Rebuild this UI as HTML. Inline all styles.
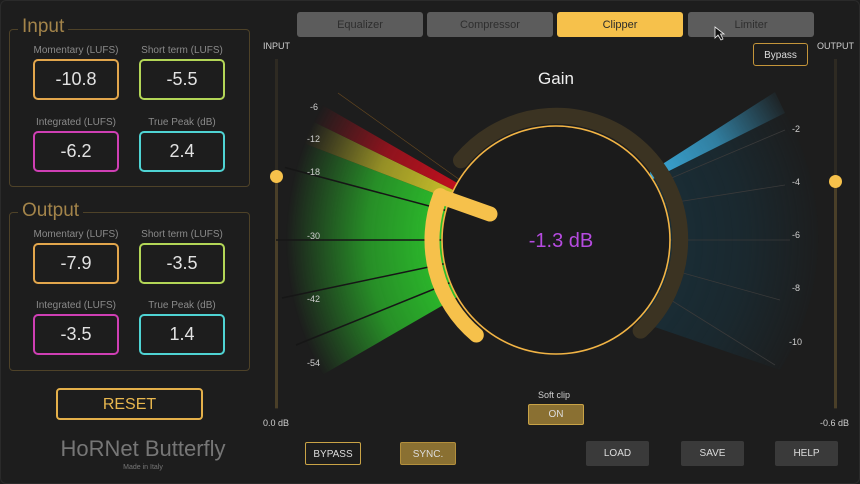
<!DOCTYPE html>
<html><head><meta charset="utf-8"><style>
*{margin:0;padding:0;box-sizing:border-box}
body{width:860px;height:484px;background:#1d1d1d;overflow:hidden;position:relative;font-family:"Liberation Sans Narrow","Liberation Sans",sans-serif;color:#ccc}
.a{position:absolute}
.grp{position:absolute;border:1.5px solid #4e4228;border-radius:4px}
.leg{position:absolute;background:#1d1d1d;color:#a3844a;font-size:19px;padding:0 4px;line-height:20px}
.lbl{position:absolute;font-size:10px;color:#8a8a8a;text-align:center;width:110px}
.val{position:absolute;width:86px;height:41px;border:2px solid;border-radius:5px;font-size:18px;color:#e2e2e2;text-align:center;line-height:37px}
.tab{position:absolute;top:12px;height:25px;width:126px;background:#5c5c5c;border-radius:3px;font-size:11px;color:#2e2e2e;text-align:center;line-height:25px;padding-top:1px}
.btn{position:absolute;height:23px;font-size:10px;text-align:center;line-height:21px;border-radius:2px;color:#ddd;padding-top:1px}
.sm{position:absolute;font-size:9px;color:#cfcfcf}
</style></head><body>
<div class="a" style="left:0;top:0;width:860px;height:484px;border:1px solid #2a2a2a;border-radius:6px"></div>

<div class="grp" style="left:9px;top:29px;width:241px;height:158px"></div>
<div class="leg" style="left:18px;top:17px">Input</div>
<div class="lbl" style="left:21px;top:45px">Momentary (LUFS)</div>
<div class="lbl" style="left:127px;top:45px">Short term (LUFS)</div>
<div class="val" style="left:33px;top:59px;border-color:#e2a64c">-10.8</div>
<div class="val" style="left:139px;top:59px;border-color:#b3d657">-5.5</div>
<div class="lbl" style="left:21px;top:117px">Integrated (LUFS)</div>
<div class="lbl" style="left:127px;top:117px">True Peak (dB)</div>
<div class="val" style="left:33px;top:131px;border-color:#cf3fb4">-6.2</div>
<div class="val" style="left:139px;top:131px;border-color:#4fd3d3">2.4</div>

<div class="grp" style="left:9px;top:212px;width:241px;height:159px"></div>
<div class="leg" style="left:18px;top:201px">Output</div>
<div class="lbl" style="left:21px;top:229px">Momentary (LUFS)</div>
<div class="lbl" style="left:127px;top:229px">Short term (LUFS)</div>
<div class="val" style="left:33px;top:243px;border-color:#e2a64c">-7.9</div>
<div class="val" style="left:139px;top:243px;border-color:#b3d657">-3.5</div>
<div class="lbl" style="left:21px;top:300px">Integrated (LUFS)</div>
<div class="lbl" style="left:127px;top:300px">True Peak (dB)</div>
<div class="val" style="left:33px;top:314px;border-color:#cf3fb4">-3.5</div>
<div class="val" style="left:139px;top:314px;border-color:#4fd3d3">1.4</div>

<div class="a" style="left:56px;top:388px;width:147px;height:32px;border:2px solid #e4b04a;border-radius:4px;color:#e8b74e;font-size:16px;text-align:center;line-height:30px">RESET</div>
<div class="a" style="left:20px;top:436px;width:246px;text-align:center;font-size:22px;color:#767676">HoRNet Butterfly</div>
<div class="a" style="left:20px;top:464px;width:246px;text-align:center;font-size:7px;color:#777">Made in Italy</div>

<div class="sm" style="left:263px;top:41px">INPUT</div>
<div class="a" style="left:275px;top:59px;width:3px;height:350px;background:#2e2a22"></div>
<div class="a" style="left:275px;top:176px;width:3px;height:232px;background:#4a3f28"></div>
<div class="a" style="left:270px;top:170px;width:13px;height:13px;border-radius:50%;background:#f6c14b"></div>
<div class="sm" style="left:263px;top:418px">0.0 dB</div>
<div class="sm" style="left:817px;top:41px">OUTPUT</div>
<div class="a" style="left:834px;top:59px;width:3px;height:350px;background:#2e2a22"></div>
<div class="a" style="left:834px;top:181px;width:3px;height:227px;background:#4a3f28"></div>
<div class="a" style="left:829px;top:175px;width:13px;height:13px;border-radius:50%;background:#f6c14b"></div>
<div class="sm" style="left:820px;top:418px">-0.6 dB</div>

<div class="tab" style="left:297px">Equalizer</div>
<div class="tab" style="left:427px">Compressor</div>
<div class="tab" style="left:557px;background:#f6c14b;color:#2a2a2a">Clipper</div>
<div class="tab" style="left:688px">Limiter</div>
<div class="btn" style="left:753px;top:43px;width:55px;border:1.5px solid #c4953a;border-radius:3px">Bypass</div>

<svg class="a" style="left:0;top:0" width="860" height="484" viewBox="0 0 860 484">
<defs>
<radialGradient id="fl" gradientUnits="userSpaceOnUse" cx="556" cy="240" r="270">
<stop offset="0.42" stop-color="#fff" stop-opacity="1"/><stop offset="0.7" stop-color="#fff" stop-opacity="0.7"/><stop offset="1" stop-color="#fff" stop-opacity="0"/></radialGradient>
<mask id="m"><rect width="860" height="484" fill="url(#fl)"/></mask>
</defs>
<g mask="url(#m)">
<path d="M453.3 200.6 L303.8 143.3 A270 270 0 0 0 322.2 375 L460.7 295 A110 110 0 0 1 453.3 200.6Z" fill="#2cbf2c"/>
<path d="M457.1 191.8 L313.3 121.7 A270 270 0 0 0 303.8 143.3 L453.3 200.6 A110 110 0 0 1 457.1 191.8Z" fill="#c8c02a"/>
<path d="M460.7 185 L322.2 105 A270 270 0 0 0 313.3 121.7 L457.1 191.8 A110 110 0 0 1 460.7 185Z" fill="#c0101e"/>
<path d="M650 172 L775 92 L785 113 L651 180Z" fill="#3aa8d8"/>
<path d="M652 180 L785 113 A250 250 0 0 1 780 370 L640 322 Z" fill="#173848" opacity="0.6"/>
</g>
<g stroke="#161616" stroke-width="1.5">
<line x1="449.7" y1="211.5" x2="285" y2="167.5"/><line x1="446" y1="240" x2="276" y2="240"/>
<line x1="448.4" y1="262.9" x2="282" y2="298"/><line x1="454" y1="281" x2="296" y2="345"/>
</g>
<line x1="460" y1="180" x2="338" y2="93" stroke="#6a4a20" stroke-width="0.6"/>
<g stroke="#3a3a3a" stroke-width="0.8">
<line x1="658" y1="205" x2="785" y2="185"/><line x1="668" y1="240" x2="790" y2="240"/>
<line x1="665" y1="268" x2="780" y2="300"/><line x1="658" y1="292" x2="775" y2="365"/>
<line x1="655" y1="185" x2="785" y2="130"/>
</g>
<path d="M461 160.3 A124 124 0 1 1 640.6 330.6" fill="none" stroke="#3b3322" stroke-width="16" stroke-linecap="round"/>
<circle cx="556" cy="240" r="114" fill="#1b1b1b" stroke="#f2b445" stroke-width="1.6"/>
<path d="M440.2 195.6 A124 124 0 0 0 476.3 335" fill="none" stroke="#f6c14b" stroke-width="15" stroke-linecap="round"/>
<line x1="442" y1="197" x2="490" y2="214" stroke="#f6c14b" stroke-width="15" stroke-linecap="round"/>
<g font-family="Liberation Sans,sans-serif" font-size="9" fill="#cfcfcf">
<text x="310" y="110">-6</text><text x="307" y="142">-12</text><text x="307" y="175">-18</text>
<text x="307" y="239">-30</text><text x="307" y="302">-42</text><text x="307" y="366">-54</text>
<text x="792" y="132">-2</text><text x="792" y="185">-4</text><text x="792" y="238">-6</text>
<text x="792" y="291">-8</text><text x="789" y="345">-10</text>
</g>
<text x="556" y="84" text-anchor="middle" font-family="Liberation Sans,sans-serif" font-size="17" fill="#f0f0f0">Gain</text>
<text x="561" y="247" text-anchor="middle" font-family="Liberation Sans,sans-serif" font-size="20" fill="#b64be0">-1.3 dB</text>
<path d="M715 27 L715 38 L718 35 L721 40 L723 39 L720.5 34 L724 34Z" fill="#111" stroke="#eee" stroke-width="0.8"/>
</svg>

<div class="sm" style="left:538px;top:390px">Soft clip</div>
<div class="btn" style="left:528px;top:404px;width:56px;height:21px;background:#8a7032;border:1.5px solid #c9a346;line-height:18px">ON</div>
<div class="btn" style="left:305px;top:442px;width:56px;border:1.5px solid #c9a346">BYPASS</div>
<div class="btn" style="left:400px;top:442px;width:56px;background:#8a7032;border:1.5px solid #b38f3c">SYNC.</div>
<div class="btn" style="left:586px;top:441px;width:63px;height:25px;line-height:24px;background:#3a3a3a">LOAD</div>
<div class="btn" style="left:681px;top:441px;width:63px;height:25px;line-height:24px;background:#3a3a3a">SAVE</div>
<div class="btn" style="left:775px;top:441px;width:63px;height:25px;line-height:24px;background:#3a3a3a">HELP</div>
</body></html>
